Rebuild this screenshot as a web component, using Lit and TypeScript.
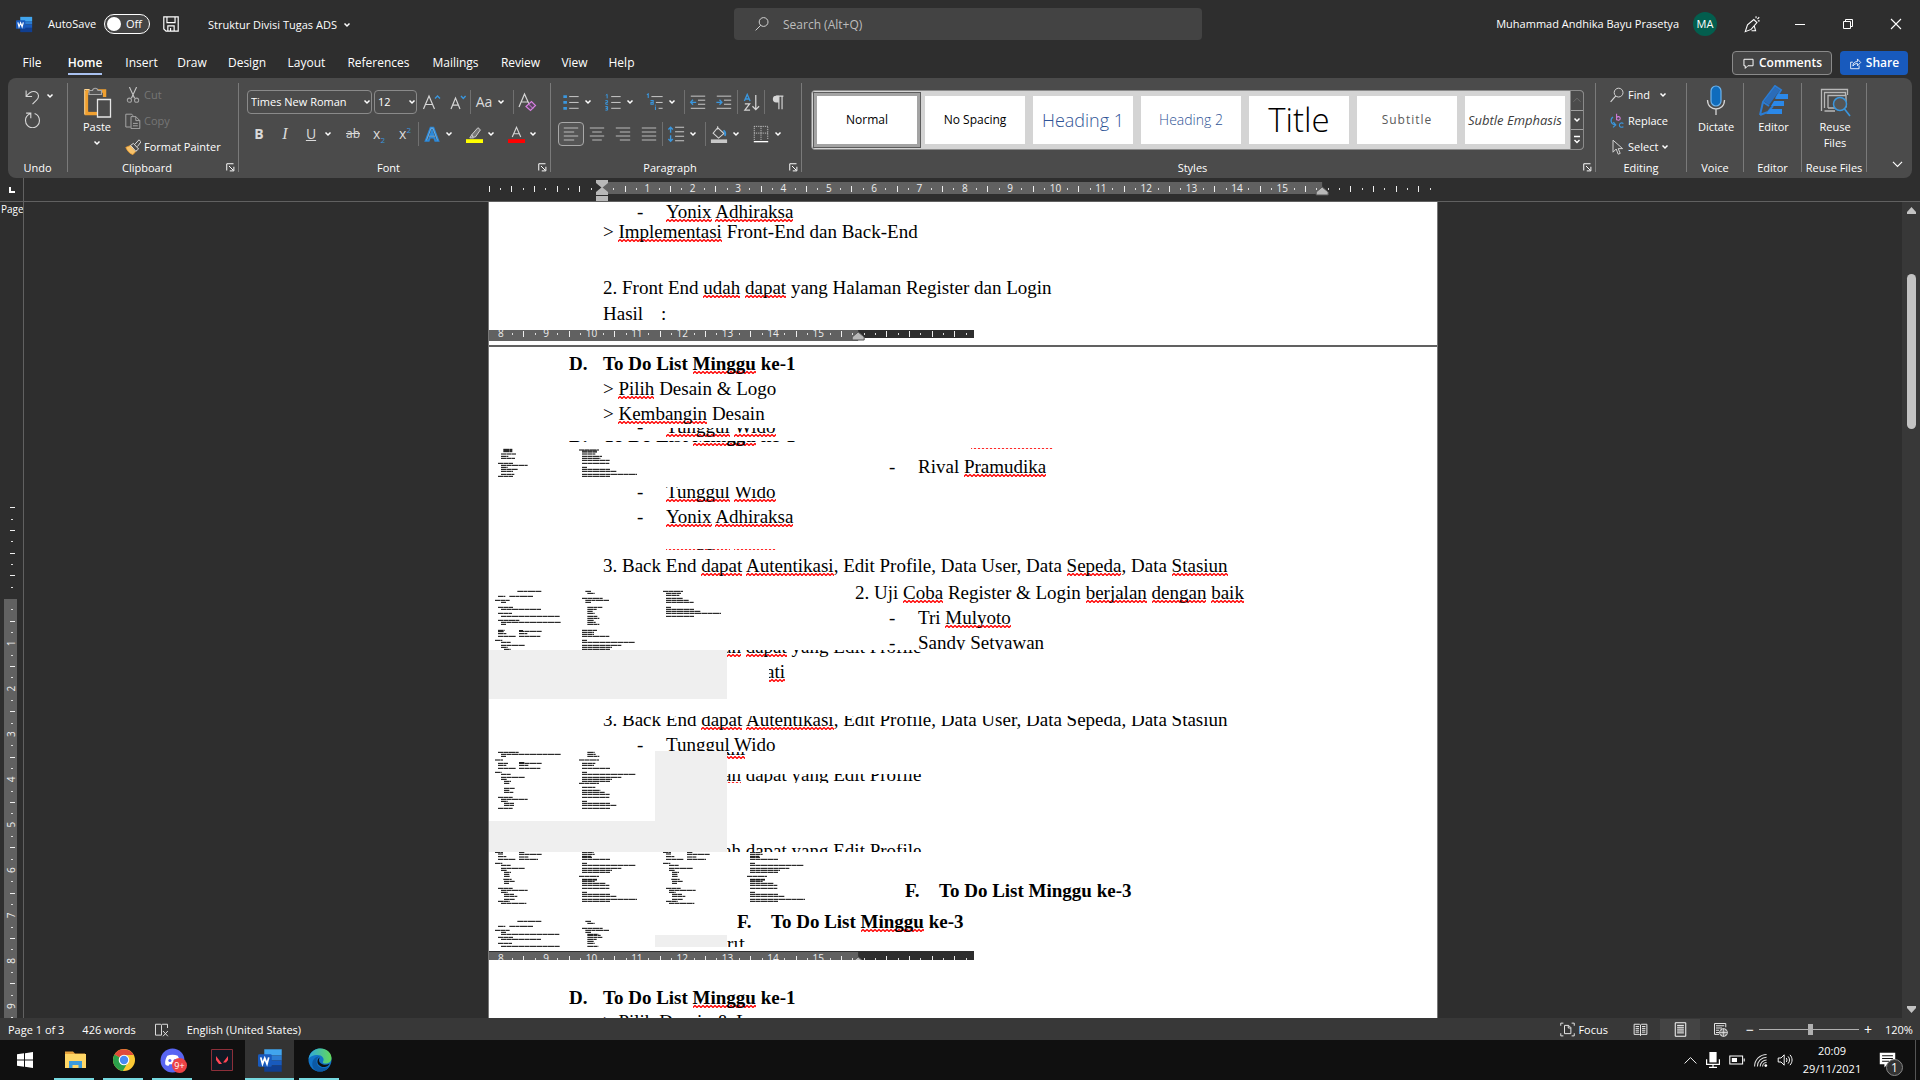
import { LitElement, html, css, svg, nothing } from "lit";
import { customElement } from "lit/decorators.js";

/* ---------- icons ---------- */

const W = "#d6d6d6";
const B = "#3a96dd";
const lines = (ys: number[], x1: number[], x2: number[], c = W) =>
  ys.map((y, i) => svg`<path d="M${x1[i]} ${y}H${x2[i]}" stroke=${c} />`);

const ICONS: Record<string, unknown> = {
  word: svg`<path d="M5 1h14v5H5z" fill="#41a5ee"/><path d="M5 6h14v4H5z" fill="#2b7cd3"/><path d="M5 10h14v4H5z" fill="#185abd"/><path d="M5 14h14v5H5z" fill="#103f91"/><rect x="0" y="5" width="11" height="10" rx="1" fill="#185abd"/><path d="M2.2 7.5l1.4 5.2 1.8-4.6 1.8 4.6 1.4-5.2" fill="none" stroke="#fff" stroke-width="1.4"/>`,
  save: svg`<path d="M2 2h16v16H4.500l-2.500-2.500zM5.500 2v6.500h9V2M6.500 18v-6h7v6M9.500 14.500v3.500" fill="none" stroke="#fff" stroke-width="1.300"/>`,
  search: svg`<circle cx="12" cy="7.500" r="5.500" fill="none" stroke=${W} stroke-width="1.200"/><path d="M8.500 11.500L2 18" stroke=${W} stroke-width="1.200"/>`,
  pen: svg`<path d="M2.500 18.500L5 11l7-6 3.500 3.500L9 16l-6.500 2.500zM12.500 12l1.500 5.500H9.500M14.500 1.500v2M18 2.500l-2 2M18.500 6.500h-2" fill="none" stroke="#fff" stroke-width="1.200"/>`,
  min: svg`<path d="M5 10.500h10" stroke="#fff"/>`,
  restore: svg`<path d="M5.500 7.500h7v7h-7zM7.500 7.500v-2h7v7h-2" fill="none" stroke="#fff"/>`,
  close: svg`<path d="M5 5l10 10M15 5L5 15" stroke="#fff" stroke-width="1.100"/>`,
  comment: svg`<path d="M3 3.500h14v10H9l-4 4v-4H3z" fill="none" stroke="#fff" stroke-width="1.500"/>`,
  share: svg`<path d="M6 8H2.500v10h13v-5M6 14c0-5 3-7 7-7V3l5 5.500-5 5V10c-3 0-5 1-7 4z" fill="none" stroke="#fff" stroke-width="1.300"/>`,
  undo: svg`<path d="M2.500 3v7H9.500M2.500 10C5.500 6 9 3 13.500 4.500c4.500 2 4.500 6.500 1.500 9.500L10 19" fill="none" stroke=${W} stroke-width="1.300"/>`,
  redo: svg`<path d="M2.500 2.500H8V8.500M8 3C3 5 1.500 8 1.800 11.500a8.200 8.200 0 0 0 16.400 0c0-4-2-7-5.700-8.500" fill="none" stroke=${W} stroke-width="1.300"/>`,
  paste: svg`<path d="M2 5h4M14 5h7v6M3 5v22.500h11" fill="none" stroke="#f0a030" stroke-width="3.500"/><path d="M1 3.500h5M1.200 3.500v25" stroke="#ffd591" fill="none" stroke-width="1"/><path d="M5 7h14v6h-5v12.500H5z" fill="#4b4b4b"/><path d="M5.500 8.500V4.500H9a2.800 2.800 0 0 1 5.500 0H18v4z" fill="#555" stroke="#a8a8a8" stroke-width="1.200"/><path d="M14 13.500h13V31H14z" fill="#4b4b4b" stroke="#e6e6e6" stroke-width="1.300"/>`,
  cut: svg`<path d="M5.500 0l6.500 14M14.500 0L8 14" stroke="#c4c4c4" stroke-width="1.400"/><circle cx="5.500" cy="16.500" r="2.600" fill="none" stroke="#a4a4a4" stroke-width="1.300"/><circle cx="14.500" cy="16.500" r="2.600" fill="none" stroke="#a4a4a4" stroke-width="1.300"/>`,
  copy: svg`<path d="M7 17.500H1V1.500h7.500l1.500 2M7.500 4.500h6l5 5v10h-11zM13.500 4.500v5h5M10 13h6M10 16h6" fill="none" stroke="#a8a8a8" stroke-width="1.200"/>`,
  painter: svg`<path d="M1 10.500l6-2.500 6.500 7.500-3.500 4C6 18.500 3 15 1 10.500z" fill="#f6c26b" stroke="#f0a030"/><path d="M7 8l3.500-2.500 6.500 7-3.500 2.800zM12 7l5.500-6L20 3.500 15.500 9.500" fill="#4b4b4b" stroke="#e0e0e0" stroke-width="1.200"/>`,
  grow: svg`<path d="M2.500 17L8 4l5.500 13M4.300 12.500h7.400" fill="none" stroke=${W} stroke-width="1.200"/><path d="M14 6.500l2.500-2.500L19 6.500" fill="none" stroke=${B} stroke-width="1.400"/>`,
  shrink: svg`<path d="M4 17L8.500 6 13 17M5.500 13.200h6" fill="none" stroke=${W} stroke-width="1.200"/><path d="M14 4l2.300 2.500L18.600 4" fill="none" stroke=${B} stroke-width="1.400"/>`,
  clear: svg`<path d="M2 15L7.500 2 12 12M4 10h6.500" fill="none" stroke=${W} stroke-width="1.200"/><path d="M9 14.500l5.500-5 4 4-5 5z" fill="#5a4560" stroke="#d67fe0" stroke-width="1.200"/><path d="M11.500 12l4.500 4.500" stroke="#d67fe0"/>`,
  effects: svg`<path d="M3 17.500L8.500 3h3L17 17.500h-3.300l-1.200-3.500h-5l-1.200 3.500zM8.500 11h3L10 6.500z" fill="#4b4b4b" stroke="#2b88d8" stroke-width="2.200"/><path d="M4 17L9 3.500h2L16 17M6.500 12.500h7" fill="none" stroke="#9fd0f5" stroke-width=".6"/>`,
  marker: svg`<path d="M7 10L14 2l3 2.500-6 8.500H8zM7 10l-2.500 4H9" fill="#777" stroke=${W} stroke-width="1.100"/><path d="M0 15.500h20v4.500H0z" fill="#ff0"/>`,
  fcolor: svg`<path d="M5 13L10 1.500 15 13M6.600 9.200h6.800" fill="none" stroke=${W} stroke-width="1.300"/><path d="M0 15.500h20v4.500H0z" fill="#f00"/>`,
  bullets: svg`<path d="M1.500 2.500h4v3h-4zM1.500 9h4v3h-4zM1.500 15.500h4v3h-4z" fill=${B}/>${lines([4, 10.5, 17], [8, 8, 8], [18.5, 18.5, 18.5])}`,
  numbers: svg`<path d="M2 2.500l1.500-1v4.500M1.500 8.500h2.500v2H2v2h2.500M1.500 15h2.500v2H2h2v2H1.500" fill="none" stroke=${B} stroke-width="1.100"/>${lines([4, 10.5, 17], [8, 8, 8], [18.5, 18.5, 18.5])}`,
  multi: svg`<path d="M1 2l1.500-1v4.500M5 8.500h3v4H5.500v-2H8M10.500 15v4M10.500 13v1" fill="none" stroke=${B} stroke-width="1.200"/>${lines([4, 10.5, 17], [6, 11, 14], [18.5, 18.5, 18.5])}`,
  outdent: svg`${lines([3.5, 8, 12.5, 17], [2, 10, 10, 2], [18, 18, 18, 18])}<path d="M8 10.300H2M4.500 7.500L1.800 10.300l2.700 2.800" fill="none" stroke=${B} stroke-width="1.400"/>`,
  indent: svg`${lines([3.5, 8, 12.5, 17], [2, 10, 10, 2], [18, 18, 18, 18])}<path d="M1.500 10.300h6M5 7.500l2.700 2.800L5 13.100" fill="none" stroke=${B} stroke-width="1.400"/>`,
  sort: svg`<path d="M2.500 8.500L5.500 1.500l3 7M3.500 6.300h4" fill="none" stroke=${B} stroke-width="1.400"/><path d="M3 11.500h5l-5 6.500h5.500M14.500 2v15.500M11 14l3.500 3.500L18 14" fill="none" stroke=${W} stroke-width="1.300"/>`,
  pilcrow: svg`<path d="M11 3H8a3.500 3.500 0 0 0 0 7.500h3z" fill=${W}/><path d="M11 18V3.500M14.500 18V3.500M8 3.500h8" fill="none" stroke=${W} stroke-width="1.300"/>`,
  left: lines([2.5, 7.5, 12.5, 17.5], [1, 1, 1, 1], [19, 14, 19, 14]),
  center: lines([2.5, 7.5, 12.5, 17.5], [1, 4, 1, 4], [19, 16, 19, 16]),
  right: lines([2.5, 7.5, 12.5, 17.5], [1, 6, 1, 6], [19, 19, 19, 19]),
  justify: lines([2.5, 7.5, 12.5, 17.5], [1, 1, 1, 1], [19, 19, 19, 19]),
  spacing: svg`${lines([2.5, 7.5, 12.5, 17.5], [9, 9, 9, 9], [19, 19, 19, 19])}<path d="M4 2v6.500M4 11.500v6.500M1.500 5L4 2.500 6.500 5M1.500 15.500L4 18l2.500-2.500" fill="none" stroke=${B} stroke-width="1.500"/>`,
  shading: svg`<path d="M8.500 3l7 6.500-6 5-6-5.500zM8.500 5V1.500" fill="none" stroke=${W} stroke-width="1.200"/><path d="M15 6c2 1.500 2.500 3.500 1.500 6" fill="none" stroke=${B} stroke-width="2"/><path d="M1 16h18v4H1z" fill="#c8c8c8"/>`,
  borders: svg`<path d="M2.500 1.500h15v15M2.500 1.500v15M10 1.500v15M2.500 9h15" fill="none" stroke=${W} stroke-dasharray="1 1"/><path d="M2 18.500h16" stroke="#fff" stroke-width="1.500"/>`,
  find: svg`<circle cx="12" cy="7" r="5.500" fill="none" stroke=${W} stroke-width="1.200"/><path d="M8.500 11L2 18.500" stroke=${W} stroke-width="1.400"/>`,
  replace: svg`<path d="M9.500 1v8M9.500 5.500c2.500-2 4.500-.5 4.500 1.300S12 10 9.500 8" fill="none" stroke="#d67fe0" stroke-width="1.300"/><path d="M18 13c-3-1.500-5 0-5 2.200s2 3.500 5 2" fill="none" stroke=${B} stroke-width="1.400"/><path d="M5 5C1 8 2 14 8 15M5.500 11.500L8.500 15 5 18" fill="none" stroke=${B} stroke-width="1.500"/>`,
  select: svg`<path d="M5 1.500v15l4-4 2.500 6.500 2.500-1-2.500-6H17z" fill="none" stroke=${W} stroke-width="1.200"/>`,
  mic: svg`<rect x="11" y="1" width="10" height="20" rx="5" fill="#0f6cbd" stroke="#6cb4ee" stroke-width="1.200"/><path d="M7.500 15c0 12 17 12 17 0M16 24v6" fill="none" stroke=${W} stroke-width="1.300"/>`,
  editor: svg`<path d="M2 30l3-13L17 1l6 4-5 8M2 30l8-3 5-6M5 17l6 4" fill="none" stroke="#2b7cd3" stroke-width="2"/><path d="M6 16L17 2l5 3-11 15z" fill="#2b6cb8"/><path d="M20 9h10v5H17zM16 16h10v5H13zM12 24h12v5H8z" fill="#2b88e8"/>`,
  reuse: svg`<path d="M2.500 26V4.500h26V10M5.500 23V7.500h21V10M5.500 26H16M9 23V10.500h18v12M9 23h8" fill="none" stroke="#b8b8b8" stroke-width="1.300"/><circle cx="21" cy="19" r="6.500" fill="#555" stroke="#3a96dd" stroke-width="1.500"/><path d="M25.500 24L31 31" stroke="#3a96dd" stroke-width="1.600"/>`,
  launcher: svg`<path d="M1 10V1h9M10.500 5v5.500H5M4 4l5.500 5.500" fill="none" stroke="#fff" stroke-width="1.300"/>`,
  proof: svg`<path d="M10 17.500H2V3h6c1.500 0 2 .8 2 1.500V17.500M10 4.500C10 3.800 10.500 3 12 3h6v5M12 12l6.500 7M18.500 12L12 19" fill="none" stroke="#e0e0e0" stroke-width="1.300"/>`,
  focus: svg`<path d="M1 5V1.500h3.500M15.500 1.500H19V5M19 15v3.500h-3.500M4.500 18.500H1V15M6 4.500h5.500l3 3v8H6zM11 4.500V8h3.500" fill="none" stroke="#e8e8e8" stroke-width="1.300"/>`,
  read: svg`<path d="M10 4v14M1.500 3h7L10 4l1.500-1h7v13.500h-7L10 18l-1.500-1.500h-7zM3.500 6h4.500M3.500 8.500h4.500M3.500 11h4.500M3.500 13.500h4.500M12 6h4.500M12 8.500h4.500M12 11h4.500M12 13.500h4.500" fill="none" stroke="#e8e8e8" stroke-width="1.300"/>`,
  print: svg`<path d="M3 1h14v18H3zM5.500 4.500h9M5.500 7h9M5.500 9.500h9M5.500 12h9M5.500 14.500h9" fill="none" stroke="#fff" stroke-width="1.300"/>`,
  web: svg`<path d="M8 16.500H2V2h15v5M4 5h11M4 8h8M4 11h4M4 14h4" fill="none" stroke="#e8e8e8" stroke-width="1.300"/><circle cx="14" cy="14" r="5" fill="#383838" stroke="#e8e8e8" stroke-width="1.400"/><path d="M9 14h10M14 9v10M11.500 10c1 3 1 5 0 8M16.500 10c-1 3-1 5 0 8" fill="none" stroke="#e8e8e8"/>`,
  start: svg`<path d="M2 4.300l7-1v6.300H2zM10 3.200L18 2v7.600h-8zM2 10.500h7v6.300l-7-1zM10 10.500h8V18l-8-1.200z" fill="#fff"/>`,
  explorer: svg`<path d="M2 3.500h8l2 2h10v2H2z" fill="#e8a33d"/><path d="M2 6h21v14H2z" fill="#ffd766"/><path d="M6 20v-7h13v7h-3.500v-3h-6v3z" fill="#3c9bdc"/>`,
  chrome: svg`<circle cx="12" cy="12" r="11" fill="#fbc934"/><path d="M12 12L2.500 6.500A11 11 0 0 1 21.600 7H12z" fill="#e04a3a"/><path d="M12 12L2.500 6.500a11 11 0 0 0 8.300 16.400L16 14z" fill="#2ba14b"/><circle cx="12" cy="12" r="5.300" fill="#fff"/><circle cx="12" cy="12" r="4.200" fill="#4a8af4"/>`,
  discord: svg`<circle cx="12" cy="12" r="11.500" fill="#5865f2"/><path d="M7 7.500c3-1.300 7-1.300 10 0 1.500 2.500 2.300 5 2 8-1 1-2 1.500-3.300 1.500l-.8-1.500H9.100L8.300 17C7 17 6 16.500 5 15.500c-.3-3 .5-5.500 2-8z" fill="#fff"/><circle cx="9.500" cy="12" r="1.500" fill="#5865f2"/><circle cx="14.500" cy="12" r="1.500" fill="#5865f2"/>`,
  valorant: svg`<path d="M1.500 1.500h21v21h-21z" fill="#101823" stroke="#8c2f39"/><path d="M6 8l6 8H9l-3-4zM18 8l-5 6.500h3L18 12z" fill="#ff4655"/>`,
  edge: svg`<defs><linearGradient id="e1" x1="0" y1="0" x2="1" y2="0"><stop offset="0" stop-color="#2fa9dc"/><stop offset="1" stop-color="#63d95a"/></linearGradient></defs><circle cx="12" cy="12" r="11.500" fill="#1173c8"/><path d="M.6 11C2 3 8 .5 12.500.5 20 .5 23.500 6 23.500 10c0 4-3 5.500-6 5.500-2.500 0-3-1-2.500-1.800C17 10.500 14 7 9.500 7 5 7 1.500 9 .6 11z" fill="url(#e1)"/><path d="M8.500 13c0 6 5.500 8.500 12.500 6-2 3-5.500 4.500-9 4.500-6 0-8.500-5-7.500-9.500.7-3 3-5.500 7-5.500-2 .8-3 2.500-3 4.500z" fill="#0c59a4"/><path d="M12 9.500c-1.500 1.500-1.500 4.500 1 6 2.500 1.700 6 1.500 8.500.3-1 2-2.500 2.900-4.500 3.200-5 .5-8-3-7.500-6 .2-1.700 1-2.900 2.500-3.500z" fill="#101010"/>`,
  up: svg`<path d="M1 14.500l9-9 9 9" fill="none" stroke="#fff" stroke-width="1.500"/>`,
  down: svg`<path d="M3 6l7 7 7-7" fill="none" stroke="#fff" stroke-width="1.700"/>`,
  tmic: svg`<rect x="5.500" y="0" width="9" height="13" fill="#fff"/><path d="M2 9v6.500h16V9M10 15.500V19.200M5 19.200h10" fill="none" stroke="#fff" stroke-width="1.500"/>`,
  battery: svg`<path d="M1 5h16v10H1zM19 8v4" fill="none" stroke="#fff" stroke-width="1.300"/><path d="M3.500 7.500H10v5H3.500z" fill="#fff"/>`,
  wifi: svg`<path d="M2 18A15 15 0 0 1 17 3M5.500 18A11.500 11.500 0 0 1 17 6.500M9 18a8 8 0 0 1 8-8M12 18a5 5 0 0 1 5-5" fill="none" stroke="#ddd" stroke-width="1.300"/><circle cx="16" cy="17" r="1.700" fill="#fff"/>`,
  sound: svg`<path d="M1.500 7.500H5L9 3.500v13l-4-4H1.500zM11.500 7.500c1.300 1.500 1.300 3.500 0 5M13.800 5.500c2.500 2.500 2.500 6.500 0 9M16.200 3.500c3.500 4 3.500 9 0 13" fill="none" stroke="#fff" stroke-width="1.200"/>`,
  notif: svg`<path d="M1 1h20v15H11l-4 4v-4H1z" fill="#fff"/><path d="M4 5h14M4 8.500h14M4 12h9" stroke="#101010" stroke-width="1.300"/>`,
};

const icon = (name: string, size = 20, view = 20) =>
  html`<svg class="ico" width=${size} height=${size} viewBox="0 0 ${view} ${view}" aria-hidden="true">${ICONS[name]}</svg>`;

const caret = html`<svg class="caret" width="8" height="8" viewBox="0 0 8 8" aria-hidden="true">
  <path d="M1.500 2.500L4 5l2.500-2.500" fill="none" stroke="#fff" stroke-width="1.500" />
</svg>`;

const caretBar = html`<svg class="caret" width="8" height="10" viewBox="0 0 8 10" aria-hidden="true">
  <path d="M1 1.500h6M1.500 5L4 7.500 6.500 5" fill="none" stroke="#fff" stroke-width="1.400" />
</svg>`;

/* ---------- rulers ---------- */

const CM = 45.35;

/** Centimetre scale; `zero` is the x of the left margin, text area ends at 15.9 cm. */
const scale = (zero: number, width: number, height: number, mid: number, from: number, to: number) => {
  const items = [];
  for (let q = from; q <= to; q++) {
    const x = zero + (q * CM) / 4;
    if (q > 0 && q < 63 && q % 4 === 0)
      items.push(svg`<text class="num" x=${x} y=${mid + 4} text-anchor="middle">${q / 4}</text>`);
    else if (q % 2 === 0 && q !== 0 && q !== 64)
      items.push(svg`<rect x=${Math.round(x)} y=${mid - 2} width="1" height="6" fill="#eee" />`);
    else if (q !== 0) items.push(svg`<rect x=${Math.round(x)} y=${mid} width="1" height="2" fill="#ddd" />`);
  }
  const left = Math.max(zero, 0);
  const right = zero + 15.88 * CM;
  return html`<svg class="scale" width=${width} height=${height} aria-hidden="true">
    <rect x=${left} y=${Math.max(mid - 6, 0)} width=${right - left} height="12" fill="#616161" />
    ${items}
    <path d="M${right - 6} ${mid + 7}v-3l6-5 6 5v3z" fill="#b8b8b8" stroke="#555" />
    ${zero > 0
      ? svg`<path d="M${zero - 6} ${mid - 8}h12v3l-6 5-6-5z" fill="#b8b8b8" /><path d="M${zero - 6} ${mid + 7}v-3l6-5 6 5v3z" fill="#b8b8b8" /><path d="M${zero - 6} ${mid + 8}h12v5h-12z" fill="#b8b8b8" />`
      : nothing}
  </svg>`;
};

const verticalScale = () => {
  const items = [];
  for (let q = -8; q <= 37; q++) {
    const y = 396 + (q * CM) / 4;
    if (q > 0 && q % 4 === 0)
      items.push(svg`<text class="num" transform="rotate(-90 15 ${y})" x="15" y=${y} text-anchor="middle">${q / 4}</text>`);
    else if (q % 2 === 0 && q !== 0) items.push(svg`<rect x="10" y=${Math.round(y)} width="5" height="1" fill="#eee" />`);
    else if (q !== 0) items.push(svg`<rect x="11" y=${Math.round(y)} width="2" height="1" fill="#ddd" />`);
  }
  return html`<svg class="scale" width="22" height="816" aria-hidden="true">
    <rect x="4" y="397" width="13" height="419" fill="#616161" />${items}
  </svg>`;
};

/* ---------- document ---------- */

type Part = string | { s: string } | { dash: string } | { tab: string } | { wide: string };
interface Band {
  top: number;
  bottom: number;
  base: number;
  x: number;
  indent?: number;
  bold?: boolean;
  parts: Part[];
}
const s = (t: string): Part => ({ s: t });
const dash: Part = { dash: "-" };

/** Visible slices of text, measured from the top left of the sheet. */
const BANDS: (Band | { top: number; bottom: number; ruler: number } | { top: number; bottom: number; rule: true })[] = [
  { top: 0, bottom: 21, base: 16, x: 148, parts: [dash, s("Yonix"), " ", s("Adhiraksa")] },
  { top: 21, bottom: 42, base: 36, x: 114, parts: ["> ", s("Implementasi"), " Front-End dan Back-End"] },
  { top: 43, bottom: 45, base: 58, x: 177, parts: ["Yonix Adhiraksa"] },
  { top: 75, bottom: 98, base: 92, x: 114, parts: ["2. Front End ", s("udah"), " ", s("dapat"), " yang Halaman Register dan Login"] },
  { top: 100, bottom: 124, base: 118, x: 114, parts: [{ wide: "Hasil" }, ":"] },
  { top: 128, bottom: 139, ruler: 3 },
  { top: 143, bottom: 145, rule: true },
  { top: 150, bottom: 173, base: 168, x: 80, bold: true, parts: [{ tab: "D." }, "To Do List ", s("Minggu"), " ke-1"] },
  { top: 175, bottom: 198, base: 193, x: 114, parts: ["> ", s("Pilih"), " Desain & Logo"] },
  { top: 200, bottom: 223, base: 218, x: 114, parts: ["> ", s("Kembangin"), " Desain"] },
  { top: 226, bottom: 236, base: 231, x: 148, parts: [dash, s("Tunggul"), " ", s("Wido")] },
  { top: 239, bottom: 244, base: 240, x: 80, bold: true, parts: [{ tab: "D." }, "To Do List ", s("Minggu"), " ke-1"] },
  { top: 246, bottom: 247, base: 243, x: 482, parts: [s("Pramudika")] },
  { top: 254, bottom: 276, base: 271, x: 400, parts: [dash, "Rival ", s("Pramudika")] },
  { top: 285, bottom: 301, base: 296, x: 148, parts: [dash, s("Tunggul"), " ", s("Wido")] },
  { top: 303, bottom: 326, base: 321, x: 148, parts: [dash, s("Yonix"), " ", s("Adhiraksa")] },
  { top: 347, bottom: 349, base: 344, x: 177, parts: [s("Tunggul"), " ", s("Wido")] },
  { top: 352, bottom: 375, base: 370, x: 114, parts: ["3. Back End ", s("dapat"), " ", s("Autentikasi"), ", Edit Profile, Data User, Data ", s("Sepeda"), ", Data ", s("Stasiun")] },
  { top: 379, bottom: 402, base: 397, x: 366, parts: ["2. Uji ", s("Coba"), " Register & Login ", s("berjalan"), " ", s("dengan"), " ", s("baik")] },
  { top: 404, bottom: 427, base: 422, x: 400, parts: [dash, "Tri ", s("Mulyoto")] },
  { top: 429, bottom: 448, base: 447, x: 400, parts: [dash, "Sandy Setyawan"] },
  { top: 448, bottom: 455, base: 451, x: 238, indent: -4, parts: [s("ah"), " ", s("dapat"), " yang Edit Profile"] },
  { top: 460, bottom: 481, base: 476, x: 280, indent: -3, parts: [s("ati")] },
  { top: 514, bottom: 529, base: 524, x: 114, parts: ["3. Back End ", s("dapat"), " ", s("Autentikasi"), ", Edit Profile, Data User, Data Sepeda, Data Stasiun"] },
  { top: 531, bottom: 550, base: 549, x: 148, parts: [dash, "Tunggul Wido"] },
  { top: 550, bottom: 557, base: 553, x: 238, indent: -6, parts: [s("kni")] },
  { top: 572, bottom: 581, base: 579, x: 238, indent: -4, parts: [s("ah"), " dapat yang Edit Profile"] },
  { top: 642, bottom: 650, base: 655, x: 238, indent: -4, parts: ["ah dapat yang Edit Profile"] },
  { top: 676, bottom: 700, base: 695, x: 416, bold: true, parts: [{ tab: "F." }, "To Do List Minggu ke-3"] },
  { top: 708, bottom: 731, base: 726, x: 248, bold: true, parts: [{ tab: "F." }, "To Do List ", s("Minggu"), " ke-3"] },
  { top: 737, bottom: 745, base: 748, x: 238, parts: ["rif"] },
  { top: 749, bottom: 758, ruler: 7 },
  { top: 783, bottom: 807, base: 802, x: 80, bold: true, parts: [{ tab: "D." }, "To Do List ", s("Minggu"), " ke-1"] },
  { top: 812, bottom: 835, base: 826, x: 114, parts: ["> ", s("Pilih"), " Desain & Logo"] },
];

/* Miniature page previews: x, y, length in thirds of a pixel. */
type Mark = [number, number, number];
const COL_L: Mark[] = [[45, 487, 24], [54, 492, 15], [54, 500, 25], [54, 508, 52], [117, 487, 16], [117, 493, 68], [117, 501, 28], [117, 508, 57], [45, 520, 22], [63, 526, 29], [63, 535, 72], [63, 541, 18], [72, 547, 21], [72, 553, 16], [72, 559, 18], [70, 568, 25], [72, 574, 33], [72, 580, 15], [54, 595, 44], [63, 601, 80], [63, 607, 20], [72, 613, 30], [72, 619, 40], [72, 628, 33], [54, 634, 35], [63, 640, 76]];
const COL_R: Mark[] = [[306, 487, 35], [306, 493, 38], [306, 499, 28], [306, 502, 30], [306, 508, 85], [306, 520, 15], [306, 526, 160], [306, 535, 118], [306, 541, 90], [306, 547, 85], [297, 559, 60], [306, 568, 45], [306, 570, 45], [306, 574, 38], [306, 580, 70], [306, 586, 82], [306, 595, 82], [306, 607, 15], [306, 613, 85], [306, 619, 103], [306, 628, 165], [306, 634, 85]];
const shift = (m: Mark[], dx: number): Mark[] => m.map(([x, y, w]) => [x + dx, y, w]);

const PREVIEWS: { cls: string; w: number; h: number; ox: number; oy: number; marks: Mark[] }[] = [
  { cls: "p1", w: 166, h: 32, ox: 27, oy: 54, marks: [[70, 58, 27], [70, 61, 27], [70, 65, 27], [63, 72, 45], [63, 79, 22], [63, 85, 42], [54, 100, 45], [63, 106, 80], [63, 112, 20], [63, 118, 50], [63, 124, 36], [63, 133, 40], [54, 139, 45], [297, 60, 60], [306, 63, 45], [306, 66, 45], [306, 72, 40], [306, 79, 60], [306, 85, 55], [306, 91, 83], [306, 100, 82], [306, 112, 15], [306, 118, 85], [306, 124, 103], [306, 133, 165], [306, 139, 85]] },
  { cls: "p2", w: 238, h: 60, ox: 27, oy: 480, marks: [[112, 484, 73], [54, 499, 22], [88, 499, 72], [45, 511, 44], [63, 517, 15], [54, 532, 45], [63, 538, 120], [54, 550, 42], [63, 559, 176], [54, 571, 64], [63, 577, 180], [63, 583, 15], [54, 601, 20], [54, 605, 18], [117, 602, 12], [117, 604, 68], [54, 611, 25], [117, 611, 25], [54, 619, 54], [117, 619, 64], [45, 631, 22], [63, 637, 29], [63, 646, 72], [63, 652, 20], [72, 658, 20], [316, 484, 18], [322, 490, 22], [306, 505, 62], [316, 511, 72], [316, 517, 18], [322, 532, 45], [322, 538, 28], [322, 544, 16], [322, 550, 22], [322, 559, 30], [322, 565, 36], [322, 571, 20], [322, 577, 25], [322, 583, 36], [306, 601, 45], [306, 607, 36], [306, 613, 36], [306, 619, 82], [306, 631, 15], [306, 637, 158], [306, 646, 118], [306, 652, 90], [306, 658, 85], [549, 484, 60], [558, 490, 45], [558, 496, 40], [558, 505, 50], [558, 511, 68], [558, 517, 83], [558, 532, 15], [558, 538, 85], [558, 544, 103], [558, 550, 165], [558, 559, 85]] },
  { cls: "p3", w: 166, h: 70, ox: 27, oy: 183, marks: [[54, 187, 62], [63, 193, 180], [63, 199, 15], [45, 210, 24], [54, 220, 30], [117, 218, 16], [117, 220, 68], [54, 226, 25], [117, 226, 28], [54, 235, 54], [117, 235, 64], [45, 247, 20], [63, 253, 29], [63, 262, 72], [63, 268, 18], [72, 274, 21], [72, 280, 16], [72, 295, 33], [72, 301, 16], [72, 307, 28], [54, 322, 44], [63, 328, 80], [63, 334, 20], [72, 340, 30], [72, 346, 30], [54, 355, 44], [322, 187, 22], [322, 193, 25], [322, 199, 36], [297, 210, 60], [306, 220, 40], [306, 226, 36], [306, 235, 85], [306, 247, 15], [306, 253, 160], [306, 262, 118], [306, 268, 90], [306, 274, 85], [297, 280, 60], [306, 292, 40], [306, 301, 55], [306, 307, 68], [306, 313, 83], [306, 322, 82], [306, 334, 15], [306, 340, 85], [306, 346, 103], [306, 355, 85]] },
  { cls: "p4", w: 340, h: 54, ox: 27, oy: 486, marks: [...COL_L, ...COL_R, ...shift(COL_L, 504), ...shift(COL_R, 504)] },
  { cls: "p5", w: 166, h: 27, ox: 27, oy: 690, marks: [[112, 694, 73], [54, 709, 22], [88, 709, 72], [45, 721, 44], [63, 727, 15], [63, 733, 175], [54, 742, 45], [63, 748, 120], [54, 760, 42], [63, 769, 176], [316, 694, 18], [322, 700, 22], [306, 715, 62], [316, 721, 72], [316, 727, 18], [322, 733, 33], [322, 736, 40], [322, 742, 45], [322, 748, 28], [322, 754, 20], [322, 760, 22], [322, 769, 33]] },
];

const renderPart = (p: Part) => {
  if (typeof p === "string") return p;
  if ("s" in p) return html`<span class="spell">${p.s}</span>`;
  if ("dash" in p) return html`<span class="dash">-</span>`;
  if ("tab" in p) return html`<span class="tabbed">${p.tab}</span>`;
  return html`<span class="wide">${p.wide}</span>`;
};

const LINE_BASE = 19;

@customElement("word-sheet")
export class WordSheet extends LitElement {
  static styles = css`
    :host { display: flex; flex-direction: column; position: relative; width: 948px; height: 100%; overflow: hidden; background: #fff; color: #000; box-shadow: -1px 0 #777, 1px 0 #777; font: 19px/25px "Liberation Serif", "Times New Roman", serif; }
    .band { overflow: hidden; box-sizing: border-box; flex: none; }
    .line { margin: 0; white-space: pre; }
    .bold { font-weight: 700; }
    .spell { background: url("data:image/svg+xml,%3Csvg xmlns='http://www.w3.org/2000/svg' width='4' height='3'%3E%3Cpath d='M-1 1.500L0 2.500 2 .5l2 2 1-1' fill='none' stroke='%23f00' stroke-width='1.300'/%3E%3C/svg%3E") repeat-x left bottom; }
    .dash, .tabbed, .wide { display: inline-block; text-indent: 0; }
    .dash { width: 29px; }
    .tabbed { width: 34px; }
    .wide { width: 58px; }
    .rule { background: #616161; }
    .strip { width: 485px; height: 100%; }
    .dark { height: 8px; background: #2e2e2e; }
    .dark.tall { height: 9px; }
    .scale { display: block; overflow: hidden; }
    .num { font: 10px "Open Sans", sans-serif; fill: #eee; }
    .blank, .preview { position: absolute; left: 0; }
    .blank { background: #efefef; }
    .b1 { top: 448px; width: 238px; height: 49px; }
    .b2 { top: 549px; left: 166px; width: 72px; height: 101px; }
    .b3 { top: 619px; width: 238px; height: 31px; }
    .b4 { top: 733px; left: 166px; width: 72px; height: 12px; }
    .p1 { top: 246px; }
    .p2 { top: 388px; }
    .p3 { top: 549px; }
    .p4 { top: 650px; }
    .p5 { top: 718px; }
  `;

  render() {
    let y = 0;
    return html`
      ${BANDS.map((b) => {
        const gap = b.top - y;
        y = b.bottom;
        const box = `margin-top:${gap}px;height:${b.bottom - b.top}px`;
        if ("rule" in b) return html`<div class="band rule" style=${box}></div>`;
        if ("ruler" in b)
          return html`<div class="band" style=${box}>
            <div class="strip"><div class="dark ${b.ruler > 5 ? "tall" : ""}">${scale(-351, 485, 11, b.ruler, 32, 73)}</div></div>
          </div>`;
        const lift = b.base - LINE_BASE - b.top;
        return html`<div class="band" style="${box};margin-left:${b.x}px">
          <p class="line ${b.bold ? "bold" : ""}" style="margin-top:${lift}px;text-indent:${b.indent ?? 0}px">${b.parts.map(renderPart)}</p>
        </div>`;
      })}
      <div class="blank b1"></div>
      <div class="blank b2"></div>
      <div class="blank b3"></div>
      <div class="blank b4"></div>
      ${PREVIEWS.map(
        (p) => html`<svg class="preview ${p.cls}" width=${p.w} height=${p.h} viewBox="0 0 ${p.w * 3} ${p.h * 3}" aria-hidden="true">
          <path d=${p.marks.map(([x, my, w]) => `M${x - p.ox} ${my - p.oy}h${w}`).join("")} stroke="#000" stroke-width="3" stroke-dasharray="17 1 12 1 22 1" />
        </svg>`
      )}
    `;
  }
}

/* ---------- shell ---------- */

const TABS = ["File", "Home", "Insert", "Draw", "Design", "Layout", "References", "Mailings", "Review", "View", "Help"];
const STYLES: [string, string][] = [["Normal", ""], ["No Spacing", ""], ["Heading 1", "h1"], ["Heading 2", "h2"], ["Title", "title"], ["Subtitle", "subtitle"], ["Subtle Emphasis", "emph"]];

const btn = (label: string, body: unknown, cls = "") => html`<button class="ib ${cls}" aria-label=${label}>${body}</button>`;
const split = (label: string, body: unknown) => html`<button class="ib split" aria-label=${label}><span class="cell">${body}</span>${caret}</button>`;
const sep = html`<span class="sep"></span>`;

@customElement("app-root")
export class AppRoot extends LitElement {
  static styles = css`
    :host { display: flex; flex-direction: column; height: 100vh; overflow: hidden; background: #2e2e2e; color: #fff; font: 12px/16px "Open Sans", "Noto Sans", sans-serif; white-space: nowrap; }
    * { box-sizing: border-box; }
    button, input, select { font: inherit; color: inherit; background: none; border: 0; padding: 0; margin: 0; }
    .ico, .caret { display: block; flex: none; }

    .titlebar { display: grid; grid-template-columns: 1fr 468px 1fr; height: 48px; align-items: center; padding-left: 16px; }
    .tl, .tr { display: flex; align-items: center; font-size: 11px; }
    .tl { gap: 12px; }
    .auto { display: flex; align-items: center; gap: 8px; margin-left: 3px; }
    .toggle { position: relative; display: flex; align-items: center; width: 46px; height: 20px; border: 1px solid #fff; border-radius: 10px; background: #444; }
    .toggle input { appearance: none; width: 14px; height: 14px; margin: 0 5px 0 2px; border-radius: 50%; background: #fff; }
    .doc { display: flex; align-items: center; gap: 6px; margin-left: 16px; padding-top: 1px; }
    .search { display: flex; align-items: center; gap: 13px; height: 32px; padding-left: 20px; border-radius: 4px; background: #434343; }
    .search input { flex: 1; outline: 0; padding-top: 1px; }
    .search input::placeholder { color: #bdbdbd; opacity: 1; }
    .tr { justify-content: flex-end; }
    .avatar { width: 24px; height: 24px; margin: 0 11px 0 14px; border-radius: 50%; background: #035e4e; text-align: center; line-height: 24px; }
    .win { display: grid; place-items: center; width: 48px; height: 48px; }

    .tabs { display: flex; align-items: center; justify-content: space-between; height: 30px; padding: 0 12px 0 10px; }
    .tablist { display: grid; grid-template-columns: 44px 62px 51px 50px 60px 59px 85px 69px 61px 47px 47px; justify-items: center; }
    .tab { height: 27px; padding-top: 4px; border-bottom: 2px solid transparent; margin-bottom: 3px; }
    .tab.on { font-weight: 600; border-color: #a9c1f0; }
    .actions { display: flex; gap: 8px; }
    .action { display: flex; align-items: center; justify-content: center; gap: 4px; height: 24px; border-radius: 4px; font-weight: 600; }
    .comments { width: 100px; border: 1px solid #8a8a8a; background: #444; }
    .share { width: 68px; background: #185abd; }

    .ribbon { display: flex; height: 100px; margin: 0 8px; border-radius: 8px; background: #4b4b4b; padding: 5px 0 6px; font-size: 11px; }
    .group { display: flex; flex-direction: column; border-right: 1px solid #7a7a7a; }
    .gbody { flex: 1; min-height: 0; display: flex; }
    .gfoot { display: flex; justify-content: center; align-items: center; height: 9px; }
    .gname { flex: 1; text-align: center; }
    .gfoot button { width: 12px; }
    .undo { width: 60px; }
    .clip { width: 171px; }
    .fontg { width: 312px; }
    .para { width: 251px; }
    .styles { flex: 1; min-width: 0; }
    .editing { width: 91px; }
    .voice { width: 57px; }
    .ed { width: 58px; }
    .ru { width: 65px; }
    .tail { width: 45px; display: flex; align-items: flex-end; justify-content: center; padding: 0 0 1px 16px; }
    .stack { display: flex; flex-direction: column; }
    .rows { display: flex; flex-direction: column; gap: 8px; padding: 7px 0 0 7px; }
    .row { display: flex; height: 24px; align-items: center; }
    .ib { display: flex; align-items: center; justify-content: center; width: 26px; height: 24px; }
    .ib.on { border: 1px solid #a8a8a8; border-radius: 4px; background: #555; }
    .split { width: 42px; justify-content: flex-start; }
    .cell { display: grid; place-items: center; width: 26px; }
    .sep { width: 1px; height: 24px; background: #707070; }
    .combo { position: relative; display: flex; align-items: center; height: 24px; border: 1px solid #8a8a8a; border-radius: 4px; }
    .combo select { appearance: none; flex: 1; min-width: 0; padding-left: 3px; outline: 0; }
    .fam { width: 125px; margin: 0 2px 0 1px; }
    .size { width: 43px; margin-right: 1px; }
    .glyph { font-size: 14px; color: #dadada; }
    .glyph.b { font-weight: 700; }
    .glyph.i { font-style: italic; font-family: "Liberation Serif", serif; font-size: 16px; }
    .glyph.u { text-decoration: underline; }
    .glyph.st { font-size: 12px; text-decoration: line-through; }
    .glyph sub, .glyph sup { font-size: 8px; color: #3a96dd; line-height: 0; }

    .undo .stack { padding: 1px 0 0 16px; gap: 3px; }
    .undo .split { gap: 5px; }
    .paste { display: flex; flex-direction: column; align-items: center; gap: 2px; width: 57px; padding: 3px 0 0 1px; line-height: 14px; }
    .paste .caret { margin-top: 3px; }
    .list { display: flex; flex-direction: column; padding-top: 2px; gap: 6px; }
    .item { display: flex; align-items: center; gap: 3px; height: 20px; }
    .item.off { color: #767676; }
    .editing .list { padding-left: 13px; }
    .item .caret { margin-left: 6px; }
    .item.tight .caret { margin-left: 0; }
    .big { display: flex; flex-direction: column; align-items: center; gap: 2px; width: 100%; padding: 2px 0 0 2px; }

    .gallery { display: flex; flex: 1; height: 60px; margin: 7px 11px 0 9px; border: 1px solid #8a8a8a; border-radius: 4px; background: #d4d4d4; overflow: hidden; }
    .tiles { flex: 1; display: flex; padding: 1px; }
    .tile { width: 108px; height: 56px; padding: 4px; }
    .tile.on { border: 1px solid #5c5c5c; background: #a3a3a3; padding: 3px; }
    .face { display: flex; align-items: center; justify-content: center; height: 48px; background: #fff; color: #000; overflow: hidden; font-size: 12px; line-height: 40px; }
    .h1 { font: 300 18px/40px "Open Sans", sans-serif; color: #2f5496; }
    .h2 { font: 300 14px/40px "Open Sans", sans-serif; color: #2f5496; }
    .title { font: 300 33px/40px "Open Sans", sans-serif; }
    .subtitle { color: #5a5a5a; letter-spacing: 1px; }
    .emph { font-size: 13px; font-style: italic; color: #404040; justify-content: flex-start; padding-left: 3px; }
    .pager { display: flex; flex-direction: column; width: 14px; background: #4b4b4b; border-left: 1px solid #8a8a8a; }
    .pager button { flex: 1; display: grid; place-items: center; }
    .pager button + button { border-top: 1px solid #a0a0a0; }
    .dim { opacity: 0.3; }

    .rulerrow { display: grid; grid-template-columns: 24px 1fr 18px; height: 24px; border-bottom: 1px solid #616161; }
    .corner { border-right: 1px solid #616161; display: grid; place-items: center; }
    .center { display: flex; justify-content: center; min-width: 0; overflow: hidden; }
    .scale { display: block; overflow: visible; flex: none; }
    .num { font: 10px "Open Sans", sans-serif; fill: #eee; }

    .desk { flex: 1; min-height: 0; display: grid; grid-template-columns: 24px 1fr 18px; grid-template-rows: 100%; overflow: hidden; }
    .vr { position: relative; border-right: 1px solid #616161; overflow: hidden; }
    .tip { position: absolute; top: 0; left: 1px; width: 23px; background: #2e2e2e; overflow: hidden; font-size: 10px; line-height: 14px; }
    .scroll { display: flex; flex-direction: column; align-items: center; background: #383838; padding: 5px 0; }
    .thumb { width: 9px; height: 155px; margin-top: 60px; border-radius: 5px; background: #c3c3c3; }
    .grow { flex: 1; }

    .status { display: flex; align-items: center; height: 22px; background: #383838; padding: 1px 5px 0 8px; font-size: 11px; }
    .sl, .sr { display: flex; align-items: center; }
    .sl { gap: 18px; flex: 1; }
    .view { display: grid; place-items: center; width: 40px; height: 22px; }
    .view.on { background: #444; }
    .fbtn { display: flex; align-items: center; gap: 3px; margin-right: 12px; }
    .zoomer { display: flex; align-items: center; margin-left: 5px; }
    .zoom { appearance: none; width: 100px; height: 22px; margin: 0 4px; }
    .zoom::-webkit-slider-runnable-track { height: 1px; background: #b0b0b0; }
    .zoom::-webkit-slider-thumb { appearance: none; width: 5px; height: 11px; margin-top: -5px; background: #b0b0b0; }
    .zb { width: 10px; font-size: 14px; }
    .pct { margin-left: 12px; width: 30px; }

    .task { display: flex; height: 40px; background: #101010; padding-right: 4px; }
    .apps { display: flex; flex: 1; }
    .app { position: relative; display: grid; place-items: center; width: 49px; height: 40px; }
    .run::after { content: ""; position: absolute; left: 5px; right: 4px; bottom: 0; height: 2px; background: #76d9e0; }
    .app.active { background: #333; }
    .app.active::after { left: 0; right: 0; }
    .badge { position: absolute; right: 9px; bottom: 7px; width: 15px; height: 15px; border-radius: 50%; background: #ed4245; font-size: 9px; line-height: 15px; text-align: center; }
    .apps .app + .app { padding-left: 2px; }
    .tray { display: flex; align-items: center; gap: 8px; }
    .tray button { display: grid; place-items: center; }
    .clock { width: 62px; font-size: 11px; line-height: 18px; text-align: center; margin-right: 5px; }
    .tray .note { position: relative; width: 40px; height: 40px; border-right: 1px solid #555; justify-items: start; padding-left: 3px; }
    .count { position: absolute; left: 10px; top: 19px; width: 17px; height: 17px; border: 1px solid #888; border-radius: 50%; background: #333; line-height: 15px; text-align: center; }
  `;

  private foot(name: string, launch = false) {
    return html`<div class="gfoot"><span class="gname">${name}</span>${launch ? html`<button aria-label="${name} settings">${icon("launcher", 9, 12)}</button>` : nothing}</div>`;
  }

  private titlebar() {
    return html`<header class="titlebar">
      <div class="tl">
        ${icon("word", 17)}
        <label class="auto">AutoSave <span class="toggle"><input type="checkbox" role="switch" />Off</span></label>
        <button aria-label="Save">${icon("save", 18)}</button>
        <button class="doc">Struktur Divisi Tugas ADS ${caret}</button>
      </div>
      <label class="search">${icon("search", 16)}<input type="search" placeholder="Search (Alt+Q)" aria-label="Search" /></label>
      <div class="tr">
        <span>Muhammad Andhika Bayu Prasetya</span><span class="avatar">MA</span>
        <button class="win" aria-label="Draw">${icon("pen", 18)}</button>
        <button class="win" aria-label="Minimize">${icon("min")}</button>
        <button class="win" aria-label="Restore">${icon("restore")}</button>
        <button class="win" aria-label="Close">${icon("close")}</button>
      </div>
    </header>`;
  }

  private ribbon() {
    return html`<section class="ribbon" aria-label="Home">
      <div class="group undo">
        <div class="gbody stack">
          <button class="ib split" aria-label="Undo"><span>${icon("undo", 17)}</span>${caret}</button>
          <button aria-label="Redo">${icon("redo", 17)}</button>
        </div>
        ${this.foot("Undo")}
      </div>
      <div class="group clip">
        <div class="gbody">
          <button class="paste"><svg class="ico" width="29" height="32" viewBox="0 0 28 32" aria-hidden="true">${ICONS.paste}</svg>Paste${caret}</button>
          <div class="list">
            <button class="item off" disabled>${icon("cut", 16)}Cut</button>
            <button class="item off" disabled>${icon("copy", 16)}Copy</button>
            <button class="item">${icon("painter", 16)}Format Painter</button>
          </div>
        </div>
        ${this.foot("Clipboard", true)}
      </div>
      <div class="group fontg">
        <div class="gbody rows">
          <div class="row">
            <label class="combo fam"><select aria-label="Font"><option>Times New Roman</option></select>${caret}</label>
            <label class="combo size"><select aria-label="Font size"><option>12</option></select>${caret}</label>
            ${btn("Grow font", icon("grow"))}${btn("Shrink font", icon("shrink"))}${sep}
            ${split("Change case", html`<span class="glyph">Aa</span>`)}${sep}${btn("Clear formatting", icon("clear"))}
          </div>
          <div class="row">
            ${btn("Bold", html`<span class="glyph b">B</span>`)}${btn("Italic", html`<span class="glyph i">I</span>`)}
            ${split("Underline", html`<span class="glyph u">U</span>`)}${btn("Strikethrough", html`<span class="glyph st">ab</span>`)}
            ${btn("Subscript", html`<span class="glyph">x<sub>2</sub></span>`)}${btn("Superscript", html`<span class="glyph">x<sup>2</sup></span>`)}${sep}
            ${split("Text effects", icon("effects", 18))}${split("Highlight", icon("marker", 17))}${split("Font color", icon("fcolor", 17))}
          </div>
        </div>
        ${this.foot("Font", true)}
      </div>
      <div class="group para">
        <div class="gbody rows">
          <div class="row">
            ${split("Bullets", icon("bullets", 18))}${split("Numbering", icon("numbers", 18))}${split("Multilevel list", icon("multi", 18))}${sep}
            ${btn("Decrease indent", icon("outdent", 18))}${btn("Increase indent", icon("indent", 18))}${sep}
            ${btn("Sort", icon("sort", 19))}${sep}${btn("Show marks", icon("pilcrow", 18))}
          </div>
          <div class="row">
            ${btn("Align left", icon("left", 16), "on")}${btn("Center", icon("center", 16))}${btn("Align right", icon("right", 16))}${btn("Justify", icon("justify", 16))}${sep}
            ${split("Line spacing", icon("spacing", 18))}${sep}${split("Shading", icon("shading", 18))}${split("Borders", icon("borders", 18))}
          </div>
        </div>
        ${this.foot("Paragraph", true)}
      </div>
      <div class="group styles">
        <div class="gbody">
          <div class="gallery">
            <div class="tiles">
              ${STYLES.map(([n, c], i) => html`<button class="tile ${i === 0 ? "on" : ""}"><span class="face ${c}">${n}</span></button>`)}
            </div>
            <div class="pager">
              <button aria-label="Scroll up" class="dim">${icon("up", 8)}</button>
              <button aria-label="Scroll down">${caret}</button>
              <button aria-label="More styles">${caretBar}</button>
            </div>
          </div>
        </div>
        ${this.foot("Styles", true)}
      </div>
      <div class="group editing">
        <div class="gbody list">
          <button class="item">${icon("find", 16)}Find ${caret}</button>
          <button class="item">${icon("replace", 16)}Replace</button>
          <button class="item tight">${icon("select", 16)}Select ${caret}</button>
        </div>
        ${this.foot("Editing")}
      </div>
      <div class="group voice"><div class="gbody"><button class="big">${icon("mic", 32, 32)}Dictate</button></div>${this.foot("Voice")}</div>
      <div class="group ed"><div class="gbody"><button class="big">${icon("editor", 32, 32)}Editor</button></div>${this.foot("Editor")}</div>
      <div class="group ru"><div class="gbody"><button class="big">${icon("reuse", 32, 32)}<span>Reuse<br />Files</span></button></div>${this.foot("Reuse Files")}</div>
      <div class="tail"><button aria-label="Collapse ribbon">${icon("down", 13)}</button></div>
    </section>`;
  }

  render() {
    return html`
      ${this.titlebar()}
      <div class="tabs">
        <nav class="tablist">${TABS.map((t) => html`<button class="tab ${t === "Home" ? "on" : ""}">${t}</button>`)}</nav>
        <div class="actions">
          <button class="action comments">${icon("comment", 13)}Comments</button>
          <button class="action share">${icon("share", 13)}Share</button>
        </div>
      </div>
      ${this.ribbon()}
      <div class="rulerrow">
        <div class="corner"><svg class="ico" width="6" height="6" aria-hidden="true"><path d="M1 0v5h5" fill="none" stroke="#fff" stroke-width="2" /></svg></div>
        <div class="center">${scale(113, 948, 23, 10, -10, 73)}</div>
      </div>
      <main class="desk">
        <div class="vr">${verticalScale()}<span class="tip">Page</span></div>
        <div class="center"><word-sheet></word-sheet></div>
        <div class="scroll">
          <svg class="ico" width="9" height="7" aria-hidden="true"><path d="M0 7V5l4.500-5L9 5v2z" fill="#c3c3c3" /></svg>
          <div class="thumb"></div>
          <div class="grow"></div>
          <svg class="ico" width="9" height="7" aria-hidden="true"><path d="M0 0h9v2L4.500 7 0 2z" fill="#c3c3c3" /></svg>
        </div>
      </main>
      <footer class="status">
        <div class="sl"><span>Page 1 of 3</span><span>426 words</span>${icon("proof", 15)}<span>English (United States)</span></div>
        <div class="sr">
          <button class="fbtn">${icon("focus", 15)}Focus</button>
          <button class="view" aria-label="Read mode">${icon("read", 15)}</button>
          <button class="view on" aria-label="Print layout">${icon("print", 15)}</button>
          <button class="view" aria-label="Web layout">${icon("web", 15)}</button>
          <div class="zoomer">
            <button class="zb" aria-label="Zoom out">−</button>
            <input class="zoom" type="range" min="0" max="100" value="52" aria-label="Zoom" />
            <button class="zb" aria-label="Zoom in">+</button>
          </div>
          <span class="pct">120%</span>
        </div>
      </footer>
      <div class="task">
        <div class="apps">
          <button class="app" aria-label="Start">${icon("start", 20)}</button>
          <button class="app run" aria-label="Explorer">${icon("explorer", 24, 24)}</button>
          <button class="app run" aria-label="Chrome">${icon("chrome", 24, 24)}</button>
          <button class="app run" aria-label="Discord">${icon("discord", 25, 24)}<span class="badge">9+</span></button>
          <button class="app" aria-label="Valorant">${icon("valorant", 24, 24)}</button>
          <button class="app run active" aria-label="Word">${icon("word", 25)}</button>
          <button class="app run" aria-label="Edge">${icon("edge", 24, 24)}</button>
        </div>
        <div class="tray">
          <button aria-label="Hidden icons">${icon("up", 13)}</button>
          ${icon("tmic", 16)}${icon("battery", 16)}${icon("wifi", 16)}${icon("sound", 16)}
          <div class="clock">20:09<br />29/11/2021</div>
          <button class="note" aria-label="Notifications">${icon("notif", 17, 22)}<span class="count">1</span></button>
        </div>
      </div>
    `;
  }
}
